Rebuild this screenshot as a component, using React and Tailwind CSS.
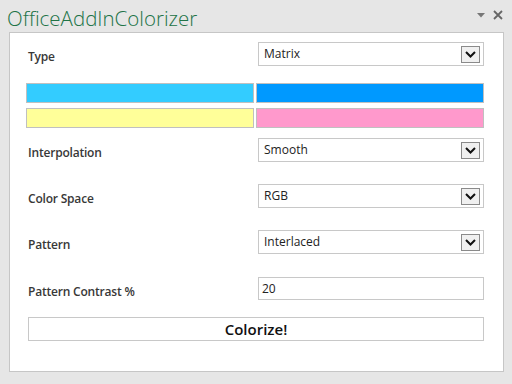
import React from "react";

const FONT = { fontFamily: '"Open Sans", "Noto Sans", sans-serif' };

const Chevron = () => (
	<svg width="11" height="7" viewBox="0 0 11 7" className="block">
		<path d="M1 1 L5.5 5.5 L10 1" fill="none" stroke="#111" strokeWidth="2" />
	</svg>
);

const SelectBox = ({ value }) => (
	<div className="w-[226px] h-6 border border-[#c8c8c8] bg-white flex items-center justify-between pl-[5px] pr-[3px]">
		<span className="text-[12px] text-[#222] leading-none">{value}</span>
		<div className="w-[19px] h-[17px] border border-[#8a8a8a] bg-[#f0f0f0] flex items-center justify-center">
			<Chevron />
		</div>
	</div>
);

const Row = ({ label, children, className }) => (
	<div className={`flex h-6 ${className}`}>
		<div className="w-[232px] pl-[2px] pt-[6px] text-[12px] leading-[18px] font-semibold tracking-[-0.2px] text-[#383838]">
			{label}
		</div>
		{children}
	</div>
);

const swatches = [
	["bg-[#33ccff]", "bg-[#0099ff]"],
	["bg-[#ffff99]", "bg-[#ff99cc]"],
];

export default function App() {
	return (
		<div className="w-[512px] h-[384px] bg-[#e6e6e6] overflow-hidden" style={FONT}>
			<div className="h-8 flex items-start justify-between pl-[7px] pr-[9px]">
				<div className="text-[20.5px] font-light text-[#217346] leading-none mt-[8px]">
					OfficeAddInColorizer
				</div>
				<div className="flex items-center gap-[8px] mt-[10px]">
					<svg width="8" height="5" viewBox="0 0 8 5">
						<path d="M0 0 H8 L4 4.5 Z" fill="#777" />
					</svg>
					<svg width="10" height="10" viewBox="0 0 10 10">
						<path d="M1 1 L9 9 M9 1 L1 9" stroke="#666" strokeWidth="1.8" />
					</svg>
				</div>
			</div>
			<div className="ml-[9px] w-[495px] h-[340px] border border-[#c6c6c6] bg-white flex flex-col pl-4 pr-[19px]">
				<Row label="Type" className="mt-[9px]">
					<SelectBox value="Matrix" />
				</Row>
				{swatches.map((pair, i) => (
					<div key={i} className={`flex gap-[2px] ${i === 0 ? "mt-[17px]" : "mt-[5px]"}`}>
						{pair.map((c) => (
							<div key={c} className={`w-[228px] h-5 border border-[#c0c0c0] ${c}`} />
						))}
					</div>
				))}
				<Row label="Interpolation" className="mt-[10px]">
					<SelectBox value="Smooth" />
				</Row>
				<Row label="Color Space" className="mt-[22px]">
					<SelectBox value="RGB" />
				</Row>
				<Row label="Pattern" className="mt-[22px]">
					<SelectBox value="Interlaced" />
				</Row>
				<Row label="Pattern Contrast %" className="mt-[23px]">
					<div className="w-[226px] h-[23px] border border-[#c8c8c8] bg-white flex items-center pl-[3px] text-[12px] text-[#222]">
						20
					</div>
				</Row>
				<button className="mt-4 ml-[2px] w-[456px] h-6 border border-[#c8c8c8] bg-white text-[15px] font-semibold text-[#111] leading-none">
					Colorize!
				</button>
			</div>
		</div>
	);
}
